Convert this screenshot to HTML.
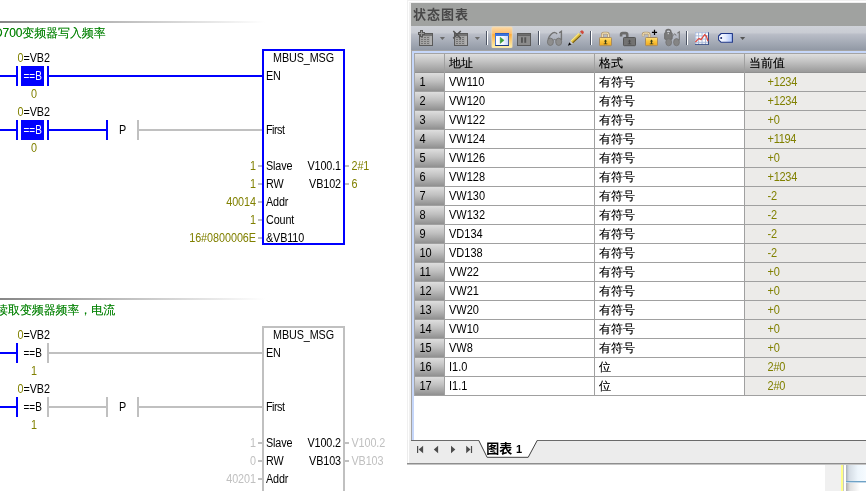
<!DOCTYPE html>
<html lang="zh"><head><meta charset="utf-8"><title>状态图表</title>
<style>
html,body{margin:0;padding:0;background:#fff;}
body{will-change:transform;width:866px;height:491px;position:relative;overflow:hidden;font-family:"Liberation Sans","Noto Sans CJK SC",sans-serif;font-size:11px;color:#000;}
.a{position:absolute;}
.t{position:absolute;white-space:nowrap;line-height:12px;height:12px;font-size:10.8px;letter-spacing:-0.1px;transform:translateY(-0.4px) scaleY(1.14);transform-origin:0 10px;}
.ol{color:#808000;}
.gy{color:#c0c0c0;}
.r{text-align:right;}
.bl{background:#0000ff;}
.gr{background:#c0c0c0;}
.cn{transform:none;font-family:"Liberation Sans","WenQuanYi Zen Hei","Noto Sans CJK SC",sans-serif;font-size:12px;color:#008000;line-height:14px;height:14px;}
.net{position:absolute;left:0;width:400px;height:280px;}
.grad{position:absolute;left:0;top:0;width:265px;height:2px;background:linear-gradient(to right,#868686 0%,#ffffff 100%);}
/* panel */
#panel{position:absolute;left:407px;top:0;width:459px;height:465px;background:#f0f0f0;}
#title{position:absolute;left:4px;top:3px;right:0;height:23px;background:#a0a2a0;}
#title span{position:absolute;left:2px;top:3.5px;font-size:13px;letter-spacing:1px;line-height:16px;font-weight:bold;color:#484848;font-family:"Liberation Sans","Noto Sans CJK SC",sans-serif;}
#tb{position:absolute;left:4px;top:26px;right:0;height:24px;background:linear-gradient(to bottom,#cfd2d8 0%,#c9ccd3 27%,#b8bcc6 36%,#a4aab5 70%,#9299a5 100%);}
#grid{position:absolute;left:4px;top:50px;right:0;height:390px;background:#fff;}
.hdr{position:absolute;top:4px;height:18px;background:linear-gradient(to bottom,#dedede 0%,#c4c4c4 40%,#9a9a9a 100%);}
.rh{position:absolute;left:4px;width:29px;height:18px;background:linear-gradient(to bottom,#dedede 0%,#c0c0c0 45%,#909090 100%);}
.ct{position:absolute;white-space:nowrap;font-size:12px;line-height:14px;height:14px;}
.lt{font-size:11px;transform:scaleY(1.1);transform-origin:0 11px;}
.zh{text-shadow:0 0 0 rgba(0,0,0,0.45);}
.cn{text-shadow:0 0 0 rgba(0,128,0,0.45);}
.zh{font-family:"Liberation Sans","WenQuanYi Zen Hei","Noto Sans CJK SC",sans-serif;font-size:12px;}
</style></head><body>
<div class="net" style="top:21px">
<div class="grad"></div>
<div class="t cn" style="left:-6px;top:5.3px">D700变频器写入频率</div>
<div class="t" style="left:17.6px;top:31px"><span class="ol">0</span>=VB2</div>
<div class="a bl" style="left:0;top:54px;width:16px;height:2px"></div>
<div class="a bl" style="left:16px;top:45px;width:2px;height:20px"></div>
<div class="a bl" style="left:21px;top:45px;width:23px;height:20px"></div>
<div class="a bl" style="left:47px;top:45px;width:2px;height:20px"></div>
<div class="t" style="left:23.5px;top:49px;color:#fff;font-size:10px;letter-spacing:0;transform:translateY(0.9px) scaleY(1.22);transform-origin:0 9.3px">==B</div>
<div class="a bl" style="left:49px;top:54px;width:213px;height:2px"></div>
<div class="t ol" style="left:31px;top:67px">0</div>
<div class="t" style="left:17.6px;top:85px"><span class="ol">0</span>=VB2</div>
<div class="a bl" style="left:0;top:108px;width:16px;height:2px"></div>
<div class="a bl" style="left:16px;top:99px;width:2px;height:20px"></div>
<div class="a bl" style="left:21px;top:99px;width:23px;height:20px"></div>
<div class="a bl" style="left:47px;top:99px;width:2px;height:20px"></div>
<div class="t" style="left:23.5px;top:103px;color:#fff;font-size:10px;letter-spacing:0;transform:translateY(0.9px) scaleY(1.22);transform-origin:0 9.3px">==B</div>
<div class="a bl" style="left:49px;top:108px;width:57px;height:2px"></div>
<div class="a bl" style="left:106px;top:99px;width:2px;height:20px"></div>
<div class="t" style="left:119px;top:103px">P</div>
<div class="a gr" style="left:137px;top:99px;width:2px;height:20px"></div>
<div class="a gr" style="left:139px;top:108px;width:123px;height:2px"></div>
<div class="t ol" style="left:31px;top:121px">0</div>
<div class="a" style="left:262px;top:28px;width:79px;height:192px;border:2px solid #0000ff;background:#fff"></div>
<div class="t" style="left:273px;top:31px">MBUS_MSG</div>
<div class="t" style="left:266px;top:49px">EN</div>
<div class="t" style="left:266px;top:103px;letter-spacing:-0.5px">First</div>
<div class="t" style="left:266px;top:139px;letter-spacing:-0.12px">Slave</div>
<div class="a gr" style="left:258px;top:144px;width:4px;height:2px"></div>
<div class="t r ol" style="left:156px;width:100px;top:139px;letter-spacing:-0.04px">1</div>
<div class="t" style="left:266px;top:157px;letter-spacing:-0.12px">RW</div>
<div class="a gr" style="left:258px;top:162px;width:4px;height:2px"></div>
<div class="t r ol" style="left:156px;width:100px;top:157px;letter-spacing:-0.04px">1</div>
<div class="t" style="left:266px;top:175px;letter-spacing:-0.12px">Addr</div>
<div class="a gr" style="left:258px;top:180px;width:4px;height:2px"></div>
<div class="t r ol" style="left:156px;width:100px;top:175px;letter-spacing:-0.04px">40014</div>
<div class="t" style="left:266px;top:193px;letter-spacing:-0.12px">Count</div>
<div class="a gr" style="left:258px;top:198px;width:4px;height:2px"></div>
<div class="t r ol" style="left:156px;width:100px;top:193px;letter-spacing:-0.04px">1</div>
<div class="t" style="left:266px;top:211px;letter-spacing:-0.12px">&amp;VB110</div>
<div class="a gr" style="left:258px;top:216px;width:4px;height:2px"></div>
<div class="t r ol" style="left:156px;width:100px;top:211px;letter-spacing:-0.04px">16#0800006E</div>
<div class="t r" style="left:281px;width:60px;top:139px">V100.1</div>
<div class="a gr" style="left:345px;top:144px;width:4px;height:2px"></div>
<div class="t ol" style="left:351.5px;top:139px">2#1</div>
<div class="t r" style="left:281px;width:60px;top:157px">VB102</div>
<div class="a gr" style="left:345px;top:162px;width:4px;height:2px"></div>
<div class="t ol" style="left:351.5px;top:157px">6</div>
</div>
<div class="net" style="top:298px">
<div class="grad"></div>
<div class="t cn" style="left:-3.9px;top:5.3px">读取变频器频率，电流</div>
<div class="t" style="left:17.6px;top:31px"><span class="ol">0</span>=VB2</div>
<div class="a bl" style="left:0;top:54px;width:16px;height:2px"></div>
<div class="a bl" style="left:16px;top:45px;width:2px;height:20px"></div>
<div class="a gr" style="left:47px;top:45px;width:2px;height:20px"></div>
<div class="t" style="left:23.5px;top:49px;color:#000;font-size:10px;letter-spacing:0;transform:translateY(0.9px) scaleY(1.22);transform-origin:0 9.3px">==B</div>
<div class="a gr" style="left:49px;top:54px;width:213px;height:2px"></div>
<div class="t ol" style="left:31px;top:67px">1</div>
<div class="t" style="left:17.6px;top:85px"><span class="ol">0</span>=VB2</div>
<div class="a bl" style="left:0;top:108px;width:16px;height:2px"></div>
<div class="a bl" style="left:16px;top:99px;width:2px;height:20px"></div>
<div class="a gr" style="left:47px;top:99px;width:2px;height:20px"></div>
<div class="t" style="left:23.5px;top:103px;color:#000;font-size:10px;letter-spacing:0;transform:translateY(0.9px) scaleY(1.22);transform-origin:0 9.3px">==B</div>
<div class="a gr" style="left:49px;top:108px;width:57px;height:2px"></div>
<div class="a gr" style="left:106px;top:99px;width:2px;height:20px"></div>
<div class="t" style="left:119px;top:103px">P</div>
<div class="a gr" style="left:137px;top:99px;width:2px;height:20px"></div>
<div class="a gr" style="left:139px;top:108px;width:123px;height:2px"></div>
<div class="t ol" style="left:31px;top:121px">1</div>
<div class="a" style="left:262px;top:28px;width:79px;height:192px;border:2px solid #c0c0c0;background:#fff"></div>
<div class="t" style="left:273px;top:31px">MBUS_MSG</div>
<div class="t" style="left:266px;top:49px">EN</div>
<div class="t" style="left:266px;top:103px;letter-spacing:-0.5px">First</div>
<div class="t" style="left:266px;top:139px;letter-spacing:-0.12px">Slave</div>
<div class="a gr" style="left:258px;top:144px;width:4px;height:2px"></div>
<div class="t r gy" style="left:156px;width:100px;top:139px;letter-spacing:-0.04px">1</div>
<div class="t" style="left:266px;top:157px;letter-spacing:-0.12px">RW</div>
<div class="a gr" style="left:258px;top:162px;width:4px;height:2px"></div>
<div class="t r gy" style="left:156px;width:100px;top:157px;letter-spacing:-0.04px">0</div>
<div class="t" style="left:266px;top:175px;letter-spacing:-0.12px">Addr</div>
<div class="a gr" style="left:258px;top:180px;width:4px;height:2px"></div>
<div class="t r gy" style="left:156px;width:100px;top:175px;letter-spacing:-0.04px">40201</div>
<div class="t" style="left:266px;top:193px;letter-spacing:-0.12px">Count</div>
<div class="a gr" style="left:258px;top:198px;width:4px;height:2px"></div>
<div class="t r gy" style="left:156px;width:100px;top:193px;letter-spacing:-0.04px">1</div>
<div class="t" style="left:266px;top:211px;letter-spacing:-0.12px">&amp;VB110</div>
<div class="a gr" style="left:258px;top:216px;width:4px;height:2px"></div>
<div class="t r gy" style="left:156px;width:100px;top:211px;letter-spacing:-0.04px">16#08000064</div>
<div class="t r" style="left:281px;width:60px;top:139px">V100.2</div>
<div class="a gr" style="left:345px;top:144px;width:4px;height:2px"></div>
<div class="t gy" style="left:351.5px;top:139px">V100.2</div>
<div class="t r" style="left:281px;width:60px;top:157px">VB103</div>
<div class="a gr" style="left:345px;top:162px;width:4px;height:2px"></div>
<div class="t gy" style="left:351.5px;top:157px">VB103</div>
</div>
<div id="panel">
<div id="title"><span>状态图表</span></div>
<div id="tb"><svg class="a" style="left:0;top:0" width="455" height="24" viewBox="411 26 455 24"><defs><linearGradient id="gold" x1="0" y1="0" x2="0" y2="1"><stop offset="0" stop-color="#ffe27a"/><stop offset="0.45" stop-color="#fbc53c"/><stop offset="1" stop-color="#eea820"/></linearGradient><linearGradient id="hot" x1="0" y1="0" x2="0" y2="1"><stop offset="0" stop-color="#fdd7a2"/><stop offset="0.3" stop-color="#fcc070"/><stop offset="0.36" stop-color="#fdab3a"/><stop offset="0.7" stop-color="#fed27a"/><stop offset="1" stop-color="#fff0a8"/></linearGradient><linearGradient id="win" x1="0" y1="0" x2="1" y2="0"><stop offset="0" stop-color="#ffffff"/><stop offset="0.6" stop-color="#f4f7ff"/><stop offset="1" stop-color="#c6d6fa"/></linearGradient><linearGradient id="tag" x1="0" y1="0" x2="1" y2="0"><stop offset="0" stop-color="#ffffff"/><stop offset="0.5" stop-color="#e4ecff"/><stop offset="1" stop-color="#a8c0f8"/></linearGradient></defs><rect x="419" y="33" width="14" height="13" fill="#5a5a5a"/><rect x="420" y="34" width="12" height="2" fill="#747474"/><rect x="420" y="36" width="12" height="9" fill="#a4a4a4"/><rect x="430" y="36" width="2" height="9" fill="#b0b0b0"/><rect x="421" y="37" width="2" height="1" fill="#767676"/><rect x="424" y="37" width="2" height="1" fill="#767676"/><rect x="427" y="37" width="2" height="1" fill="#767676"/><rect x="421" y="39" width="2" height="1" fill="#767676"/><rect x="424" y="39" width="2" height="1" fill="#767676"/><rect x="427" y="39" width="2" height="1" fill="#767676"/><rect x="421" y="41" width="2" height="1" fill="#767676"/><rect x="424" y="41" width="2" height="1" fill="#767676"/><rect x="427" y="41" width="2" height="1" fill="#767676"/><rect x="421" y="43" width="2" height="1" fill="#767676"/><rect x="424" y="43" width="2" height="1" fill="#767676"/><rect x="427" y="43" width="2" height="1" fill="#767676"/><path d="M420,30 h3 v2 h2 v3 h-2 v2 h-3 v-2 h-2 v-3 h2 z" fill="#585858"/><rect x="421" y="31" width="1" height="5" fill="#9a9a9a"/><rect x="419" y="33" width="5" height="1" fill="#9a9a9a"/><path d="M439.8,37 h5.2 l-2.6,3 z" fill="#6a6a6a"/><rect x="454" y="33" width="14" height="13" fill="#5a5a5a"/><rect x="455" y="34" width="12" height="2" fill="#747474"/><rect x="455" y="36" width="12" height="9" fill="#a4a4a4"/><rect x="465" y="36" width="2" height="9" fill="#b0b0b0"/><rect x="456" y="37" width="2" height="1" fill="#767676"/><rect x="459" y="37" width="2" height="1" fill="#767676"/><rect x="462" y="37" width="2" height="1" fill="#767676"/><rect x="456" y="39" width="2" height="1" fill="#767676"/><rect x="459" y="39" width="2" height="1" fill="#767676"/><rect x="462" y="39" width="2" height="1" fill="#767676"/><rect x="456" y="41" width="2" height="1" fill="#767676"/><rect x="459" y="41" width="2" height="1" fill="#767676"/><rect x="462" y="41" width="2" height="1" fill="#767676"/><rect x="456" y="43" width="2" height="1" fill="#767676"/><rect x="459" y="43" width="2" height="1" fill="#767676"/><rect x="462" y="43" width="2" height="1" fill="#767676"/><path d="M453.3,31 L460.8,38.6 M460.8,31 L453.2,38.4" stroke="#555555" stroke-width="1.5" fill="none"/><path d="M474.8,37 h5.2 l-2.6,3 z" fill="#6a6a6a"/><rect x="486" y="31" width="1" height="14" fill="#4c5464"/><rect x="487" y="31" width="1" height="14" fill="#ffffff"/><rect x="491.5" y="26.6" width="21" height="21.4" rx="1.5" fill="#f2dcb0"/><rect x="492.2" y="27.4" width="19.6" height="20" rx="1" fill="url(#hot)"/><rect x="495" y="33" width="14" height="13" fill="#1c3c84"/><rect x="495" y="33" width="14" height="3" fill="#3c74dc"/><rect x="495" y="33" width="14" height="1" fill="#2c5cc4"/><rect x="495.6" y="36" width="12.6" height="9" fill="url(#win)"/><rect x="495" y="36" width="0.8" height="9.4" fill="#3c6cd0"/><path d="M500.2,37.2 L504.1,40.3 L500.2,43.5 z" fill="#3ca03c" stroke="#2c8c2c" stroke-width="0.4"/><rect x="517" y="33" width="14" height="13" fill="#5a5a5a"/><rect x="518" y="34" width="12" height="1.6" fill="#6e6e6e"/><rect x="518" y="36" width="12" height="9" fill="#8c8c8c"/><rect x="521" y="37.3" width="1.9" height="5.5" fill="#555555"/><rect x="524.3" y="37.3" width="1.9" height="5.5" fill="#555555"/><rect x="538" y="31" width="1" height="14" fill="#4c5464"/><rect x="539" y="31" width="1" height="14" fill="#ffffff"/><ellipse cx="550.4" cy="41.8" rx="3.0" ry="3.7" fill="#8e8e8e" stroke="#747474" stroke-width="0.9"/><ellipse cx="558.7" cy="41.8" rx="3.0" ry="3.7" fill="#8e8e8e" stroke="#747474" stroke-width="0.9"/><path d="M548.2,39 C549.5,35 552.5,32.3 555,32.6 C556.2,32.8 556.8,33.4 557,34.2" fill="none" stroke="#727272" stroke-width="1.4"/><path d="M559.2,32.8 L561.4,31.4 V40" fill="none" stroke="#727272" stroke-width="1.4"/><path d="M553.2,40.2 Q554.6,38.6 556,40.2" fill="none" stroke="#747474" stroke-width="1"/><g transform="translate(568.2,45.5) rotate(-43.8)"><path d="M-0.4,0 L3.4,-1.7 V1.7 z" fill="#0a0a0a"/><path d="M3,-1.5 L5,-1.8 V1.8 L3,1.5 z" fill="#c8c8cc"/><rect x="5" y="-1.8" width="11.5" height="3.6" fill="#dcbc38"/><rect x="5" y="-1.8" width="11.5" height="1.1" fill="#f8e890"/><rect x="5" y="0.8" width="11.5" height="1.0" fill="#6e5418"/><rect x="16.5" y="-1.8" width="1.5" height="3.6" fill="#b8b8bc"/><path d="M18,-1.8 h1.6 a1.2,1.8 0 0 1 0,3.6 h-1.6 z" fill="#d04a3c"/></g><rect x="590" y="31" width="1" height="14" fill="#4c5464"/><rect x="591" y="31" width="1" height="14" fill="#ffffff"/><path d="M602.3,37 V34.6 q0,-1.5 1.5,-1.5 h3.1 q1.5,0 1.5,1.5 V37" fill="none" stroke="#b39a74" stroke-width="2.6"/><path d="M602.3,37 V34.6 q0,-1.5 1.5,-1.5 h3.1 q1.5,0 1.5,1.5 V37" fill="none" stroke="#fff0c4" stroke-width="1"/><rect x="599.5" y="37.5" width="12" height="8.2" rx="0.8" fill="url(#gold)" stroke="#a58a62" stroke-width="1"/><path d="M605.5,39.6 l1.6,1.8 h-1 v2 h1.2 v0.9 h-3.6 v-0.9 h1.2 v-2 h-1 z" fill="#3c4018"/><path d="M621.0999999999999,36.6 V34.6 q0,-1.5 1.5,-1.5 h3.1 q1.5,0 1.5,1.5 V37" fill="none" stroke="#6c6c6c" stroke-width="2.6"/><rect x="623.5" y="37.5" width="12" height="8.2" rx="0.8" fill="#727272" stroke="#555555" stroke-width="1"/><path d="M629.5,39.6 l1.6,1.8 h-1 v2 h1.2 v0.9 h-3.6 v-0.9 h1.2 v-2 h-1 z" fill="#4a4a4a"/><path d="M643.0999999999999,36.6 V34.6 q0,-1.5 1.5,-1.5 h3.1 q1.5,0 1.5,1.5 V37" fill="none" stroke="#b39a74" stroke-width="2.6"/><path d="M643.0999999999999,36.2 V34.6 q0,-1.5 1.5,-1.5 h3.1 q1.5,0 1.5,1.5 V37" fill="none" stroke="#fff0c4" stroke-width="1"/><rect x="645.5" y="37.5" width="12" height="8.2" rx="0.8" fill="url(#gold)" stroke="#a58a62" stroke-width="1"/><path d="M651.5,39.6 l1.6,1.8 h-1 v2 h1.2 v0.9 h-3.6 v-0.9 h1.2 v-2 h-1 z" fill="#3c4018"/><path d="M654.5,29.8 V35 M651.9,32.4 H657.1" stroke="#000000" stroke-width="1.2" fill="none"/><rect x="664.6" y="32.6" width="7.6" height="6.8" rx="0.8" fill="#7a7a7a" stroke="#666666" stroke-width="0.8"/><path d="M666,32.6 V31.6 a2.4,2 0 0 1 4.8,0 V32.6" fill="none" stroke="#6e6e6e" stroke-width="1.6"/><rect x="667.6" y="32.8" width="1.4" height="1.4" fill="#c8c8c8"/><ellipse cx="668.7" cy="42.2" rx="2.9" ry="3.6" fill="#858585" stroke="#727272" stroke-width="0.8"/><ellipse cx="676.5" cy="42.2" rx="2.9" ry="3.6" fill="#858585" stroke="#727272" stroke-width="0.8"/><path d="M672.6,36.6 C673.8,33.2 675.6,33.4 676,35.6" fill="none" stroke="#727272" stroke-width="1"/><path d="M677.4,33.2 L679.3,31.8 V40.5" fill="none" stroke="#727272" stroke-width="1.1"/><rect x="686" y="31" width="1" height="14" fill="#4c5464"/><rect x="687" y="31" width="1" height="14" fill="#ffffff"/><rect x="695" y="32.3" width="13.8" height="12.4" fill="#ffffff"/><rect x="695.3" y="32.3" width="0.9" height="12.4" fill="#a4b6d8"/><rect x="698.2" y="32.3" width="0.9" height="12.4" fill="#a4b6d8"/><rect x="701.6" y="32.3" width="0.9" height="12.4" fill="#a4b6d8"/><rect x="705" y="32.3" width="0.9" height="12.4" fill="#a4b6d8"/><rect x="695" y="32.3" width="13.8" height="0.9" fill="#a4b6d8"/><rect x="695" y="35.4" width="13.8" height="0.9" fill="#a4b6d8"/><rect x="695" y="38.6" width="13.8" height="0.9" fill="#a4b6d8"/><rect x="695" y="41.8" width="13.8" height="0.9" fill="#a4b6d8"/><rect x="708" y="32.3" width="0.9" height="12.4" fill="#28407c"/><rect x="695" y="43.9" width="13.8" height="0.9" fill="#28407c"/><path d="M695.4,42 L699,38.4 L701,39.6 L704.6,34.6 L706.4,36.2 L708,41.2" fill="none" stroke="#e0483c" stroke-width="1.2"/><path d="M721.2,33.5 H732.4 V42.3 H721.2 L718.6,39.8 V36 z" fill="url(#tag)" stroke="#203888" stroke-width="1.1" stroke-linejoin="round"/><circle cx="721.2" cy="38.1" r="1" fill="#18286c"/><path d="M740,37 h5.2 l-2.6,3 z" fill="#555555"/></svg></div>
<div id="grid">
<div class="a" style="left:0;top:0;right:0;height:4px;background:#a4a4a4"></div>
<div class="a" style="left:0;top:0;width:4px;height:390px;background:#a4a4a4"></div>
<div class="a" style="left:1px;top:1px;right:0;height:2px;background:#c6d7fa"></div>
<div class="a" style="left:1px;top:1px;width:2px;height:389px;background:#c6d7fa"></div>
<div class="a" style="left:4px;top:4px;right:0;height:342px;background:#fff"></div>
<div class="a" style="left:3px;top:346px;width:1px;height:44px;background:#fff"></div>
<div class="hdr" style="left:4px;width:29px"></div>
<div class="hdr" style="left:34px;width:149px"><span class="ct zh" style="left:4px;top:2px">地址</span></div>
<div class="hdr" style="left:184px;width:149px"><span class="ct zh" style="left:4px;top:2px">格式</span></div>
<div class="hdr" style="left:334px;width:121px"><span class="ct zh" style="left:4px;top:2px">当前值</span></div>
<div class="rh" style="top:23px"><span class="ct lt" style="left:4.4px;top:2px">1</span></div>
<div class="a" style="left:334px;top:23px;width:121px;height:18px;background:#ecebe9"></div>
<span class="ct lt" style="left:38px;top:25px">VW110</span>
<span class="ct zh" style="left:188px;top:25px">有符号</span>
<span class="ct lt ol" style="left:356.6px;top:25px;letter-spacing:-0.3px">+1234</span>
<div class="a" style="left:4px;top:41px;right:0;height:1px;background:#a0a0a0"></div>
<div class="rh" style="top:42px"><span class="ct lt" style="left:4.4px;top:2px">2</span></div>
<div class="a" style="left:334px;top:42px;width:121px;height:18px;background:#ecebe9"></div>
<span class="ct lt" style="left:38px;top:44px">VW120</span>
<span class="ct zh" style="left:188px;top:44px">有符号</span>
<span class="ct lt ol" style="left:356.6px;top:44px;letter-spacing:-0.3px">+1234</span>
<div class="a" style="left:4px;top:60px;right:0;height:1px;background:#a0a0a0"></div>
<div class="rh" style="top:61px"><span class="ct lt" style="left:4.4px;top:2px">3</span></div>
<div class="a" style="left:334px;top:61px;width:121px;height:18px;background:#ecebe9"></div>
<span class="ct lt" style="left:38px;top:63px">VW122</span>
<span class="ct zh" style="left:188px;top:63px">有符号</span>
<span class="ct lt ol" style="left:356.6px;top:63px;letter-spacing:-0.3px">+0</span>
<div class="a" style="left:4px;top:79px;right:0;height:1px;background:#a0a0a0"></div>
<div class="rh" style="top:80px"><span class="ct lt" style="left:4.4px;top:2px">4</span></div>
<div class="a" style="left:334px;top:80px;width:121px;height:18px;background:#ecebe9"></div>
<span class="ct lt" style="left:38px;top:82px">VW124</span>
<span class="ct zh" style="left:188px;top:82px">有符号</span>
<span class="ct lt ol" style="left:356.6px;top:82px;letter-spacing:-0.3px">+1194</span>
<div class="a" style="left:4px;top:98px;right:0;height:1px;background:#a0a0a0"></div>
<div class="rh" style="top:99px"><span class="ct lt" style="left:4.4px;top:2px">5</span></div>
<div class="a" style="left:334px;top:99px;width:121px;height:18px;background:#ecebe9"></div>
<span class="ct lt" style="left:38px;top:101px">VW126</span>
<span class="ct zh" style="left:188px;top:101px">有符号</span>
<span class="ct lt ol" style="left:356.6px;top:101px;letter-spacing:-0.3px">+0</span>
<div class="a" style="left:4px;top:117px;right:0;height:1px;background:#a0a0a0"></div>
<div class="rh" style="top:118px"><span class="ct lt" style="left:4.4px;top:2px">6</span></div>
<div class="a" style="left:334px;top:118px;width:121px;height:18px;background:#ecebe9"></div>
<span class="ct lt" style="left:38px;top:120px">VW128</span>
<span class="ct zh" style="left:188px;top:120px">有符号</span>
<span class="ct lt ol" style="left:356.6px;top:120px;letter-spacing:-0.3px">+1234</span>
<div class="a" style="left:4px;top:136px;right:0;height:1px;background:#a0a0a0"></div>
<div class="rh" style="top:137px"><span class="ct lt" style="left:4.4px;top:2px">7</span></div>
<div class="a" style="left:334px;top:137px;width:121px;height:18px;background:#ecebe9"></div>
<span class="ct lt" style="left:38px;top:139px">VW130</span>
<span class="ct zh" style="left:188px;top:139px">有符号</span>
<span class="ct lt ol" style="left:356.6px;top:139px;letter-spacing:-0.3px">-2</span>
<div class="a" style="left:4px;top:155px;right:0;height:1px;background:#a0a0a0"></div>
<div class="rh" style="top:156px"><span class="ct lt" style="left:4.4px;top:2px">8</span></div>
<div class="a" style="left:334px;top:156px;width:121px;height:18px;background:#ecebe9"></div>
<span class="ct lt" style="left:38px;top:158px">VW132</span>
<span class="ct zh" style="left:188px;top:158px">有符号</span>
<span class="ct lt ol" style="left:356.6px;top:158px;letter-spacing:-0.3px">-2</span>
<div class="a" style="left:4px;top:174px;right:0;height:1px;background:#a0a0a0"></div>
<div class="rh" style="top:175px"><span class="ct lt" style="left:4.4px;top:2px">9</span></div>
<div class="a" style="left:334px;top:175px;width:121px;height:18px;background:#ecebe9"></div>
<span class="ct lt" style="left:38px;top:177px">VD134</span>
<span class="ct zh" style="left:188px;top:177px">有符号</span>
<span class="ct lt ol" style="left:356.6px;top:177px;letter-spacing:-0.3px">-2</span>
<div class="a" style="left:4px;top:193px;right:0;height:1px;background:#a0a0a0"></div>
<div class="rh" style="top:194px"><span class="ct lt" style="left:4.4px;top:2px">10</span></div>
<div class="a" style="left:334px;top:194px;width:121px;height:18px;background:#ecebe9"></div>
<span class="ct lt" style="left:38px;top:196px">VD138</span>
<span class="ct zh" style="left:188px;top:196px">有符号</span>
<span class="ct lt ol" style="left:356.6px;top:196px;letter-spacing:-0.3px">-2</span>
<div class="a" style="left:4px;top:212px;right:0;height:1px;background:#a0a0a0"></div>
<div class="rh" style="top:213px"><span class="ct lt" style="left:4.4px;top:2px">11</span></div>
<div class="a" style="left:334px;top:213px;width:121px;height:18px;background:#ecebe9"></div>
<span class="ct lt" style="left:38px;top:215px">VW22</span>
<span class="ct zh" style="left:188px;top:215px">有符号</span>
<span class="ct lt ol" style="left:356.6px;top:215px;letter-spacing:-0.3px">+0</span>
<div class="a" style="left:4px;top:231px;right:0;height:1px;background:#a0a0a0"></div>
<div class="rh" style="top:232px"><span class="ct lt" style="left:4.4px;top:2px">12</span></div>
<div class="a" style="left:334px;top:232px;width:121px;height:18px;background:#ecebe9"></div>
<span class="ct lt" style="left:38px;top:234px">VW21</span>
<span class="ct zh" style="left:188px;top:234px">有符号</span>
<span class="ct lt ol" style="left:356.6px;top:234px;letter-spacing:-0.3px">+0</span>
<div class="a" style="left:4px;top:250px;right:0;height:1px;background:#a0a0a0"></div>
<div class="rh" style="top:251px"><span class="ct lt" style="left:4.4px;top:2px">13</span></div>
<div class="a" style="left:334px;top:251px;width:121px;height:18px;background:#ecebe9"></div>
<span class="ct lt" style="left:38px;top:253px">VW20</span>
<span class="ct zh" style="left:188px;top:253px">有符号</span>
<span class="ct lt ol" style="left:356.6px;top:253px;letter-spacing:-0.3px">+0</span>
<div class="a" style="left:4px;top:269px;right:0;height:1px;background:#a0a0a0"></div>
<div class="rh" style="top:270px"><span class="ct lt" style="left:4.4px;top:2px">14</span></div>
<div class="a" style="left:334px;top:270px;width:121px;height:18px;background:#ecebe9"></div>
<span class="ct lt" style="left:38px;top:272px">VW10</span>
<span class="ct zh" style="left:188px;top:272px">有符号</span>
<span class="ct lt ol" style="left:356.6px;top:272px;letter-spacing:-0.3px">+0</span>
<div class="a" style="left:4px;top:288px;right:0;height:1px;background:#a0a0a0"></div>
<div class="rh" style="top:289px"><span class="ct lt" style="left:4.4px;top:2px">15</span></div>
<div class="a" style="left:334px;top:289px;width:121px;height:18px;background:#ecebe9"></div>
<span class="ct lt" style="left:38px;top:291px">VW8</span>
<span class="ct zh" style="left:188px;top:291px">有符号</span>
<span class="ct lt ol" style="left:356.6px;top:291px;letter-spacing:-0.3px">+0</span>
<div class="a" style="left:4px;top:307px;right:0;height:1px;background:#a0a0a0"></div>
<div class="rh" style="top:308px"><span class="ct lt" style="left:4.4px;top:2px">16</span></div>
<div class="a" style="left:334px;top:308px;width:121px;height:18px;background:#ecebe9"></div>
<span class="ct lt" style="left:38px;top:310px">I1.0</span>
<span class="ct zh" style="left:188px;top:310px">位</span>
<span class="ct lt ol" style="left:356.6px;top:310px;letter-spacing:-0.3px">2#0</span>
<div class="a" style="left:4px;top:326px;right:0;height:1px;background:#a0a0a0"></div>
<div class="rh" style="top:327px"><span class="ct lt" style="left:4.4px;top:2px">17</span></div>
<div class="a" style="left:334px;top:327px;width:121px;height:18px;background:#ecebe9"></div>
<span class="ct lt" style="left:38px;top:329px">I1.1</span>
<span class="ct zh" style="left:188px;top:329px">位</span>
<span class="ct lt ol" style="left:356.6px;top:329px;letter-spacing:-0.3px">2#0</span>
<div class="a" style="left:4px;top:345px;right:0;height:1px;background:#a0a0a0"></div>
<div class="a" style="left:4px;top:22px;right:0;height:1px;background:#909090"></div>
<div class="a" style="left:33px;top:4px;width:1px;height:342px;background:#a0a0a0"></div>
<div class="a" style="left:183px;top:4px;width:1px;height:342px;background:#a0a0a0"></div>
<div class="a" style="left:333px;top:4px;width:1px;height:342px;background:#a0a0a0"></div>
</div>
<div id="tabs" class="a" style="left:0;top:440px;right:0;height:23px;background:#ececec"><svg class="a" style="left:0;top:0" width="459" height="23" viewBox="407 440 459 23"><rect x="411" y="440" width="455" height="1" fill="#6a6a6a"/><path d="M478.8,440 L487.1,457.3 H528.2 L537.2,440 z" fill="#ffffff"/><path d="M478.8,440.5 L487.1,457.3 H528.2 L537.2,440.5" fill="none" stroke="#404040" stroke-width="1"/><rect x="417" y="446" width="1.2" height="7" fill="#4c4c4c"/><path d="M423.1,445.7 V453.3 L418.7,449.5 z" fill="#4c4c4c"/><path d="M438.1,445.7 V453.3 L433.8,449.5 z" fill="#4c4c4c"/><path d="M451,445.7 V453.3 L455.3,449.5 z" fill="#4c4c4c"/><path d="M466.2,445.7 V453.3 L470.5,449.5 z" fill="#4c4c4c"/><rect x="470.9" y="446" width="1.2" height="7" fill="#4c4c4c"/></svg><span class="ct" style="left:79.3px;top:1.7px;font-weight:bold;font-family:'Liberation Sans','Noto Sans CJK SC',sans-serif;font-size:13px">图表 <span style="font-size:11px">1</span></span></div>
<div class="a" style="left:0;top:463px;right:0;height:1px;background:#8e8e8e"></div><div class="a" style="left:0;top:464px;right:0;height:1px;background:#c4c4c4"></div>
<div class="a" style="left:1px;top:1px;width:1px;height:462px;background:#fff"></div><div class="a" style="left:1px;top:1px;right:0;height:1px;background:#fff"></div>
</div>
<div class="a" style="left:825px;top:465px;width:16px;height:26px;background:#f0f0f0"></div>
<div class="a" style="left:841px;top:465px;width:2px;height:26px;background:#ffff88"></div>
<div class="a" style="left:843px;top:465px;width:1px;height:26px;background:#c8c8c8"></div>
<div class="a" style="left:846px;top:465px;width:20px;height:16px;background:linear-gradient(to right,#a8b0b8 0%,#d4dce4 15%,#eef6fc 60%,#f6fbff 100%)"></div>
<div class="a" style="left:846px;top:481px;width:20px;height:1px;background:#6ea2c6"></div><div class="a" style="left:846px;top:482px;width:20px;height:1px;background:#c4d8e8"></div>
<div class="a" style="left:846px;top:483px;width:20px;height:8px;background:linear-gradient(to right,#b0b0b0 0%,#e0e0e0 20%,#ffffff 70%)"></div>
</body></html>
